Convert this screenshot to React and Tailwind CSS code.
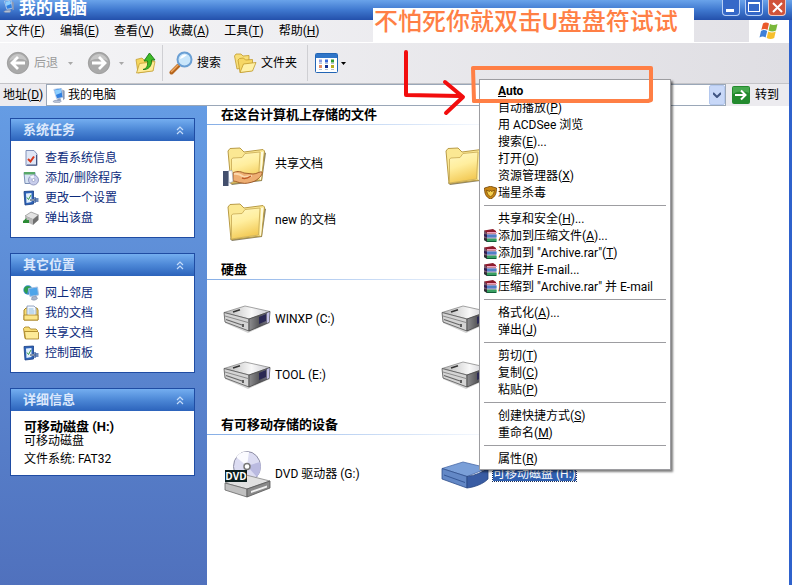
import clsx from 'clsx';

function ComputerIcon({ className }) {
  return (
    <svg className={className} viewBox="0 0 16 16">
      <path d="M2 14.500c2-2 6-2 9-.500l-1.500 1.500H4z" fill="#b9c3d6" stroke="#7d8aa5" strokeWidth=".5" />
      <path d="M3 1.500 11 0l2 10-7 1.500z" fill="#2f7fe0" stroke="#c4d3ea" strokeWidth="1" />
      <path d="M4 2.300 10.300 1l.8 4L5 7.500z" fill="#8ed0ff" />
      <path d="M12 1.500 14.500 3v8.500L13 13z" fill="#8c9ab5" />
      <path d="m7 11.500 3-.5 1 2.500H6.500z" fill="#8fa0bf" />
    </svg>
  );
}

function NavIcon({ forward }) {
  return (
    <svg className="h-6 w-6" viewBox="0 0 24 24">
      <circle cx="12" cy="12" r="10.700" fill="#a9a9a9" stroke="#959595" strokeWidth=".8" />
      <path d="M3 10a9.300 9.300 0 0 1 18 0c-5-3-13-3-18 0z" fill="#c6c6c6" />
      <path
        d={forward ? 'M5 12h12M12 6l6 6-6 6' : 'M19 12H7M12 6l-6 6 6 6'}
        fill="none"
        stroke="#fff"
        strokeWidth="2.800"
      />
    </svg>
  );
}

function UpFolderIcon() {
  return (
    <svg className="h-6 w-6" viewBox="0 0 24 24">
      <path d="M2 8.500 8 7l2 2 9-1.500v12L4 22z" fill="#f5d65e" stroke="#c49f33" strokeWidth=".8" />
      <path d="m2.500 22 3-9.500 15.500-2-2 9.500z" fill="#ffec98" stroke="#c49f33" strokeWidth=".8" />
      <path d="M9 18.500c4-1 5-4 4.500-8.500H10l5.500-8L21 9h-3.500c.5 6-3 10-8.500 9.500z" fill="#3fbb28" stroke="#1b7a14" strokeWidth=".9" />
    </svg>
  );
}

function SearchIcon() {
  return (
    <svg className="h-6 w-6" viewBox="0 0 24 24">
      <path d="m2.500 21.500 7-7" stroke="#b5651d" strokeWidth="4" strokeLinecap="round" />
      <path d="m2.500 20.500 6.500-6.500" stroke="#f0a860" strokeWidth="1.500" strokeLinecap="round" />
      <circle cx="15.500" cy="8.500" r="7" fill="#c9e6fb" stroke="#6a9fd4" strokeWidth="2" />
      <path d="M11 8a5 5 0 0 1 7-4c-2 1-3 3-7 4z" fill="#fff" />
    </svg>
  );
}

function FoldersIcon() {
  return (
    <svg className="h-6 w-6" viewBox="0 0 24 24">
      <path d="M1.500 5 3 3h5l2 2 6-.5v11L4 18z" fill="#f8df7a" stroke="#c29a2b" strokeWidth=".8" />
      <path d="m5 9 1.500-1.500 4-.5 2 2 7-.5v11L7 21.500z" fill="#f6d765" stroke="#c29a2b" strokeWidth=".8" />
      <path d="m7 21.500 3.500-8.500 12.500-1.500-3.500 8.500z" fill="#fff1a6" stroke="#c29a2b" strokeWidth=".8" />
    </svg>
  );
}

function ViewsIcon() {
  return (
    <svg className="h-5 w-6" viewBox="0 0 24 20">
      <rect x=".5" y=".5" width="22" height="19" rx="1" fill="#fff" stroke="#2265b5" />
      <path d="M1 1h21v4H1z" fill="#2f75c8" />
      <path d="M4 6.500h3v3H4z" fill="#8c9be0" />
      <path d="M10 6.500h3v3h-3z" fill="#3a67d8" />
      <path d="M16 6.500h3v3h-3z" fill="#2f9a35" />
      <path d="M4 12h3v3H4z" fill="#e58a63" />
      <path d="M10 12h3v3h-3z" fill="#152f91" />
      <path d="M16 12h3v3h-3z" fill="#b8ad1f" />
      <path d="M4 10.500h3m3 0h3m3 0h3M4 16.500h3m3 0h3m3 0h3" stroke="#b5bfd2" />
    </svg>
  );
}

function Caret({ className }) {
  return (
    <svg className={clsx('h-[3px] w-[5px]', className)} viewBox="0 0 5 3">
      <path d="M0 0h5L2.500 3z" fill="currentColor" />
    </svg>
  );
}

function WindowsFlag() {
  return (
    <svg className="h-5 w-5" viewBox="0 0 20 20">
      <path d="M4 2.500C6 1 8 1.300 10 2.500L8.500 9C6.500 7.800 4.500 7.800 2.300 9z" fill="#ea5a2c" />
      <path d="M11 3c2.500 1.300 5 1.200 7.500 0L17 9.500c-2.500 1.200-5 1.200-7.500 0z" fill="#7ab83a" />
      <path d="M2 10c2.200-1.200 4.200-1.200 6.200 0l-1.600 6.500C4.600 15.300 2.600 15.300.5 16.500z" fill="#3f80d8" />
      <path d="M9.200 10.500c2.500 1.300 5 1.200 7.500 0l-1.500 6.500c-2.500 1.300-5 1.200-7.500 0z" fill="#f7bf2c" />
    </svg>
  );
}

function DocCheckIcon() {
  return (
    <svg className="h-4 w-4" viewBox="0 0 16 16">
      <path d="M3 .5h8L14 4v11.500H3z" fill="#dfe6f6" stroke="#8291b8" />
      <path d="M13.500 5v10H4" fill="none" stroke="#46557f" />
      <path d="m5 9 2.500 2.500L11 6.500" fill="none" stroke="#d8361a" strokeWidth="2" />
    </svg>
  );
}

function ProgramsIcon() {
  return (
    <svg className="h-4 w-4" viewBox="0 0 16 16">
      <path d="M1 2.500h11v11H2z" fill="#d7e3f3" stroke="#7b8fb5" />
      <path d="M1 2h11v2.500H1z" fill="#58a868" />
      <circle cx="10.500" cy="10" r="5" fill="#c8cdeb" stroke="#7f88b4" strokeWidth=".8" />
      <path d="M10.500 10 7 6.500a5 5 0 0 1 4-1.300z" fill="#f5f7ff" />
      <circle cx="10.500" cy="10" r="1.500" fill="#fff" stroke="#7f88b4" strokeWidth=".6" />
    </svg>
  );
}

function SettingsIcon() {
  return (
    <svg className="h-4 w-4" viewBox="0 0 16 16">
      <path d="M1 1.500 10.500 1v13L2 15z" fill="#2d62b8" stroke="#173e83" strokeWidth=".8" />
      <path d="M3 3.500 8.500 3v9L3.500 13z" fill="#e2f0fd" />
      <path d="m4 7.500 1.500 2L8 5" fill="none" stroke="#3a9b46" />
      <path d="M7 10h6" stroke="#8292a8" strokeWidth="2" />
      <path d="M12 7v2h3.500M12 13v-2h3.500" fill="none" stroke="#3b62a2" strokeWidth="1.300" />
    </svg>
  );
}

function EjectIcon() {
  return (
    <svg className="h-4 w-4" viewBox="0 0 16 16">
      <path d="m2 6 6-4 7.500 3L10 9.500z" fill="#e3e3e3" stroke="#777" strokeWidth=".6" />
      <path d="m2 6 8 3.500V15l-8-4z" fill="#b8b8b8" />
      <path d="m10 9.500 5.500-4.500v5L10 15z" fill="#6f6f6f" />
      <path d="m0 11 3.500-3v2H6v3H0z" fill="#2b8b35" />
    </svg>
  );
}

function NetworkIcon() {
  return (
    <svg className="h-4 w-4" viewBox="0 0 16 16">
      <circle cx="5" cy="5" r="4.700" fill="#3f8fd0" />
      <path d="M2 2c3-2 5-1 6 1L5 5 4 9C1 7 0 5 2 2z" fill="#2f9d50" />
      <path d="m5.500 3.500 9-1.500 1 8-8.500 1.500z" fill="#4ea5ea" stroke="#a9c0e2" />
      <path d="m9 12 4-1 1.500 2.500c-2 2-4 2-6 1z" fill="#a8b4cb" stroke="#6b7a99" strokeWidth=".5" />
    </svg>
  );
}

function DocumentsIcon() {
  return (
    <svg className="h-4 w-4" viewBox="0 0 16 16">
      <path d="M1 5 3 3h11l1 2v10H1z" fill="#f7dc74" stroke="#a98422" />
      <path d="M4 1h7l2 2v9H4z" fill="#f6faff" stroke="#7c90b4" strokeWidth=".8" />
      <path d="M5.500 4h5M5.500 6h6M5.500 8h6" stroke="#87b8dc" />
      <path d="M1 10h14v5H1z" fill="#fbe58a" stroke="#a98422" strokeWidth=".8" />
    </svg>
  );
}

function SmallFolderIcon() {
  return (
    <svg className="h-4 w-4" viewBox="0 0 16 16">
      <path d="M.5 3.500 2 2h4l1.500 2H13l1.500 1.500v8H2z" fill="#f7dc74" stroke="#a27c1d" strokeWidth=".8" />
      <path d="M1.500 6.500h13l1 1V14H2.500z" fill="#fdeb98" stroke="#a27c1d" strokeWidth=".8" />
    </svg>
  );
}

function FolderIcon({ shared }) {
  return (
    <svg className="h-12 w-12" viewBox="0 0 48 48">
      <defs>
        <linearGradient id="folderFront" x1="0" y1="0" x2=".3" y2="1">
          <stop offset="0" stopColor="#fff8c4" />
          <stop offset=".5" stopColor="#ffee9e" />
          <stop offset="1" stopColor="#f3cb58" />
        </linearGradient>
      </defs>
      <path d="m41 12 2 1-4 28-30 4-2-2z" fill="#8d8468" />
      <path d="M5 11 7 8.500 17 8l4 4 19-2.500L41.500 11 38.500 40 8 43.500z" fill="#fbe893" stroke="#b99b45" />
      <path d="m38 12 2.500-.5L38 39.500 37 40z" fill="#fffbe0" />
      <path d="M8.500 19 10 18l9-.5 3-4L37 12l-1.500 27L8.500 43z" fill="url(#folderFront)" stroke="#cdb05a" strokeWidth=".9" />
      {shared && (
        <>
          <path
            d="M10 33c3-2 7-2 11 0l9 1c4 0 7-3 9-2 1 2-2 6-7 9-5 2-10 3-13 2-3 0-6-2-9-2z"
            fill="#eeae72"
            stroke="#9a5526"
            strokeWidth=".9"
          />
          <path d="M11 34c4-1 7 1 10 3l8-1" fill="none" stroke="#fbd9ae" strokeWidth="2" />
          <path d="M19 38c3 1 6 0 9-2" fill="none" stroke="#c05a26" strokeWidth="1.500" />
          <path d="m5 31 4-.5 1 11-4 1.500z" fill="#fff" stroke="#9aa4ba" strokeWidth=".6" />
          <path d="M0 31h5.500v15H0z" fill="#434f6d" />
        </>
      )}
    </svg>
  );
}

function DriveIcon() {
  return (
    <svg className="h-12 w-12" viewBox="0 0 48 48">
      <defs>
        <linearGradient id="driveTop" x1="0" y1="0" x2="1" y2="0">
          <stop offset="0" stopColor="#b4b4b4" />
          <stop offset=".6" stopColor="#f8f8f8" />
          <stop offset="1" stopColor="#c9c9cf" />
        </linearGradient>
        <linearGradient id="driveSide" x1="0" y1="0" x2="1" y2="0">
          <stop offset="0" stopColor="#8e8e90" />
          <stop offset=".5" stopColor="#555558" />
          <stop offset="1" stopColor="#7b7a92" />
        </linearGradient>
      </defs>
      <path d="m2 28 23 10 22-10v-4H2z" fill="#d2d2d2" />
      <path d="M1 17.500 22 11l25 5.500L26 24z" fill="url(#driveTop)" stroke="#8b8b8b" strokeWidth=".8" />
      <path d="M1 17.500 26 24v12L2 27z" fill="#d4d4d4" stroke="#555" strokeWidth=".8" />
      <path d="m2 21 23 6.500" stroke="#777" strokeWidth=".8" />
      <path d="m3 24.500 16 5.500" stroke="#666" strokeWidth="1.200" />
      <path d="M20 29v3" stroke="#333" strokeWidth="1.500" />
      <path d="m26 24 21-7.500-1 11L26 36z" fill="url(#driveSide)" stroke="#444" strokeWidth=".8" />
      <path d="m36 22 7-3v7l-7 3z" fill="#2b2954" />
      <path d="m44 18 2.500-1-.5 10-2 1z" fill="#c3c0e6" />
      <path d="m10 17 7-2.300" stroke="#333" strokeWidth="1.500" />
    </svg>
  );
}

function DvdIcon() {
  return (
    <svg className="h-12 w-12" viewBox="0 0 48 48">
      <ellipse cx="24" cy="16.500" rx="13.500" ry="15" fill="#dcdcf2" stroke="#8d8da4" />
      <path d="M24 16 13 7a14 15 0 0 1 13-5z" fill="#fbfbff" />
      <path d="m24 16 13-4c2 6 0 11-3 15z" fill="#babae0" />
      <circle cx="24" cy="16.500" r="3" fill="#fff" stroke="#777" strokeWidth="1.500" />
      <path d="m2 33 21-8 24 6-23 8z" fill="#e1e1e1" stroke="#888" strokeWidth=".8" />
      <path d="m2 33 22 6v8L2 40z" fill="#c0c0c0" stroke="#666" strokeWidth=".8" />
      <path d="m24 39 23-8v7l-23 9z" fill="#8a8a8a" stroke="#555" strokeWidth=".8" />
      <path d="m28 41 16-5.500v2L28 43z" fill="#f0f0f0" />
      <path d="M2 20h22v12H2z" fill="#0a1d1d" />
      <text x="13" y="30" textAnchor="middle" fontSize="10" fontWeight="700" fill="#fff" fontFamily="Open Sans, sans-serif">
        DVD
      </text>
    </svg>
  );
}

function SelectedDriveIcon() {
  return (
    <svg className="h-12 w-12" viewBox="0 0 48 48">
      <path d="M1 18.500 22 12l25 6-21 8.500z" fill="#7a9fd8" stroke="#4a6ba8" strokeWidth=".8" />
      <path d="m1 18.500 25 8V38L1 29z" fill="#6388c6" stroke="#2f4e8a" strokeWidth=".8" />
      <path d="M26 26.500c8-1 15-4 21-8.500v11c-5 5-13 8-21 9z" fill="#395ca3" stroke="#284682" strokeWidth=".8" />
      <path d="m3 25 21 7.500" stroke="#355796" />
    </svg>
  );
}

function ShieldIcon() {
  return (
    <svg className="h-[13px] w-[13px]" viewBox="0 0 13 13">
      <path d="M.5 2 4 1l2.500-1L9 1l3.500 1c0 5-1 9-6 11-5-2-6-6-6-11z" fill="#c98613" stroke="#6f4307" strokeWidth=".8" />
      <path d="m2.500 4 3 1.500L6.500 4l1 1.500 3-1.500-1 4-3 3-3-3z" fill="#f4cf50" stroke="#6f4307" strokeWidth=".7" />
    </svg>
  );
}

function RarIcon() {
  return (
    <svg className="h-[13px] w-[13px]" viewBox="0 0 13 13">
      <path d="m0 1.500 9-1.500 3 2v2.500H3z" fill="#8e1b2c" />
      <path d="M3 3h10v1H3z" fill="#f0a0c0" />
      <path d="m0 5 3 .5h9.500v3H3L0 7z" fill="#232f9c" />
      <path d="M3 6.500h10v1H3z" fill="#7fd4f2" />
      <path d="m0 9 3 .5h9.500V13H3l-3-2z" fill="#12603a" />
      <path d="M3 10.500h10v1H3z" fill="#5fe08a" />
      <path d="M0 1.500V11l3 2V4z" fill="#3a1730" opacity=".7" />
    </svg>
  );
}

// Label with its access key underlined, e.g. 文件(F)
function KeyLabel({ text, accessKey, tail }) {
  return (
    <>
      {text}
      {accessKey && (
        <>
          (<u className="underline-offset-1">{accessKey}</u>)
        </>
      )}
      {tail}
    </>
  );
}

const menus = [
  ['文件', 'F'],
  ['编辑', 'E'],
  ['查看', 'V'],
  ['收藏', 'A'],
  ['工具', 'T'],
  ['帮助', 'H'],
];

const contextGroups = [
  [
    { text: '自动播放', accessKey: 'P' },
    { text: '用 ACDSee 浏览' },
    { text: '搜索', accessKey: 'E', tail: '...' },
    { text: '打开', accessKey: 'O' },
    { text: '资源管理器', accessKey: 'X' },
    { text: '瑞星杀毒', icon: <ShieldIcon /> },
  ],
  [
    { text: '共享和安全', accessKey: 'H', tail: '...' },
    { text: '添加到压缩文件', accessKey: 'A', tail: '...', icon: <RarIcon /> },
    { text: '添加到 "Archive.rar"', accessKey: 'T', icon: <RarIcon /> },
    { text: '压缩并 E-mail...', icon: <RarIcon /> },
    { text: '压缩到 "Archive.rar" 并 E-mail', icon: <RarIcon /> },
  ],
  [
    { text: '格式化', accessKey: 'A', tail: '...' },
    { text: '弹出', accessKey: 'J' },
  ],
  [
    { text: '剪切', accessKey: 'T' },
    { text: '复制', accessKey: 'C' },
    { text: '粘贴', accessKey: 'P' },
  ],
  [
    { text: '创建快捷方式', accessKey: 'S' },
    { text: '重命名', accessKey: 'M' },
  ],
  [{ text: '属性', accessKey: 'R' }],
];

const systemTasks = [
  { text: '查看系统信息', icon: <DocCheckIcon /> },
  { text: '添加/删除程序', icon: <ProgramsIcon /> },
  { text: '更改一个设置', icon: <SettingsIcon /> },
  { text: '弹出该盘', icon: <EjectIcon /> },
];

const otherPlaces = [
  { text: '网上邻居', icon: <NetworkIcon /> },
  { text: '我的文档', icon: <DocumentsIcon /> },
  { text: '共享文档', icon: <SmallFolderIcon /> },
  { text: '控制面板', icon: <SettingsIcon /> },
];

function TitleBar() {
  return (
    <header className="flex h-5 items-start bg-linear-to-b from-[#6aa3ea] via-[#3f78cf] to-[#2450ab] pr-[6px] pl-[2px]">
      <ComputerIcon className="h-[13px] w-[13px]" />
      <h1 className="ml-1 flex-1 text-[17px] leading-4 font-bold text-white">我的电脑</h1>
      <div className="flex gap-[5px]">
        <button aria-label="最小化" className="flex h-4 w-[18px] items-end rounded-b-sm border border-t-0 border-[#b9d0f5] bg-[#3568c8] p-[3px]">
          <span className="h-[3px] w-2 bg-white" />
        </button>
        <button aria-label="最大化" className="flex h-4 w-[18px] items-end justify-center rounded-b-sm border border-t-0 border-[#b9d0f5] bg-[#3568c8] pb-[3px]">
          <span className="h-[10px] w-3 border border-t-2 border-white" />
        </button>
        <button aria-label="关闭" className="flex h-4 w-[18px] items-end justify-center rounded-b-sm border border-t-0 border-[#f0c8c0] bg-[#d0533a] pb-[2px]">
          <svg className="h-[11px] w-[11px]" viewBox="0 0 11 11">
            <path d="m1 1 9 9m0-9-9 9" stroke="#fff" strokeWidth="2" />
          </svg>
        </button>
      </div>
    </header>
  );
}

function MenuBar() {
  return (
    <nav className="flex h-[23px] items-stretch border-b border-white bg-linear-to-r from-[#f6f6f8] to-[#e2e1e6]">
      <div className="flex flex-1 items-center gap-[15px] pl-[6px]">
        {menus.map(([text, key]) => (
          <button key={key}>
            <KeyLabel text={text} accessKey={key} />
          </button>
        ))}
      </div>
      <div className="flex w-10 items-center justify-center bg-white">
        <WindowsFlag />
      </div>
    </nav>
  );
}

function Toolbar() {
  return (
    <div className="flex h-[41px] items-center border-b border-[#c4c4c8] bg-linear-to-r from-[#f5f5f7] to-[#dfdee3] pl-[6px]">
      <button className="flex items-center gap-1 text-[#9a9a9a]" disabled>
        <NavIcon />
        后退
      </button>
      <Caret className="ml-[10px] text-[#a8a8a8]" />
      <button className="ml-[14px]" aria-label="前进" disabled>
        <NavIcon forward />
      </button>
      <Caret className="ml-2 text-[#a8a8a8]" />
      <button className="ml-[10px]" aria-label="向上">
        <UpFolderIcon />
      </button>
      <span className="ml-1 h-9 w-px bg-[#cfcfd3]" />
      <button className="ml-[6px] flex items-center gap-1">
        <SearchIcon />
        搜索
      </button>
      <button className="ml-3 flex items-center gap-1">
        <FoldersIcon />
        文件夹
      </button>
      <span className="ml-[10px] h-9 w-px bg-[#cfcfd3]" />
      <button className="ml-[7px] flex items-center gap-[2px]" aria-label="视图">
        <ViewsIcon />
        <Caret />
      </button>
    </div>
  );
}

function AddressBar() {
  return (
    <div className="flex h-[22px] items-center bg-[#ecebef] pl-[3px]">
      <label htmlFor="address" className="w-[43px]">
        <KeyLabel text="地址" accessKey="D" />
      </label>
      <div className="flex h-[22px] flex-1 items-center border border-[#9aa7b8] bg-white pl-1">
        <ComputerIcon className="h-[15px] w-[15px]" />
        <input id="address" className="ml-[2px] h-4 min-w-0 flex-1 outline-none" defaultValue="我的电脑" />
        <button aria-label="地址列表" className="flex h-5 w-4 items-center justify-center rounded-xs border border-[#b4c8ee] bg-[#c8d8f8]">
          <svg className="h-[6px] w-2" viewBox="0 0 8 6">
            <path d="m0 1 4 4 4-4" fill="none" stroke="#3f5482" strokeWidth="2" />
          </svg>
        </button>
      </div>
      <button className="ml-[6px] flex w-[57px] items-center gap-[5px]">
        <svg className="h-[18px] w-[18px]" viewBox="0 0 18 18">
          <rect width="18" height="18" rx="2" fill="#238a2e" />
          <path d="M1 1h16v6C11 5 6 5 1 8z" fill="#46a84e" />
          <path d="M3 9h10M9 4.500 13.500 9 9 13.500" fill="none" stroke="#fff" strokeWidth="2" />
        </svg>
        转到
      </button>
    </div>
  );
}

function Panel({ title, children }) {
  return (
    <section className="border border-[#1f4ca3] bg-white">
      <button className="flex h-[22px] w-full items-center justify-between bg-linear-to-b from-[#74aef0] via-[#4c87d6] to-[#2c63bb] pr-[10px] pl-3 text-[13px] font-bold text-[#dbe8fc]">
        {title}
        <svg className="h-[9px] w-2" viewBox="0 0 8 9">
          <path d="M1 4 4 1l3 3M1 8l3-3 3 3" fill="none" stroke="#c6dcfa" strokeWidth="1.200" />
        </svg>
      </button>
      {children}
    </section>
  );
}

function LinkList({ items }) {
  return (
    <ul className="pt-[7px] pb-[9px] pl-3">
      {items.map((item) => (
        <li key={item.text}>
          <a href="#" className="flex h-5 items-center gap-[6px] text-[#0c2b7c]">
            {item.icon}
            {item.text}
          </a>
        </li>
      ))}
    </ul>
  );
}

function Sidebar() {
  return (
    <aside className="flex w-[207px] shrink-0 flex-col gap-[15px] bg-linear-to-b from-[#659ce4] to-[#5071bd] pt-3 pr-3 pl-[10px]">
      <Panel title="系统任务">
        <LinkList items={systemTasks} />
      </Panel>
      <Panel title="其它位置">
        <LinkList items={otherPlaces} />
      </Panel>
      <Panel title="详细信息">
        <div className="pt-2 pb-2 pl-[13px] leading-[15px]">
          <p className="text-[13px] font-bold">可移动磁盘 (H:)</p>
          <p>可移动磁盘</p>
          <p className="mt-[3px]">文件系统: FAT32</p>
        </div>
      </Panel>
    </aside>
  );
}

function FileGroup({ title, items }) {
  return (
    <section>
      <h2 className="flex h-[18px] items-center pl-[14px] text-[13px] font-bold">{title}</h2>
      <div className="h-px w-[300px] bg-linear-to-r from-[#86aee6] to-white" />
      <div className="grid grid-cols-[218px_218px] pt-[11px] pb-[13px] pl-4">
        {items.map((item, i) => (
          <div key={i} className="flex h-14 items-center gap-1">
            {item.icon}
            {item.text && (
              <span
                className={clsx(
                  'leading-[13px]',
                  item.selected && 'bg-[#2f5fb0] text-white outline-1 outline-dotted outline-[#1b2f5a]'
                )}
              >
                {item.text}
              </span>
            )}
          </div>
        ))}
      </div>
    </section>
  );
}

function ContextMenu() {
  return (
    <div className="absolute top-[79px] left-[479px] w-[192px] border border-[#9d9da1] bg-white px-1 py-[2px] shadow-[2px_2px_2px_rgba(0,0,0,0.5)]">
      <button className="flex h-[17px] w-full items-center pl-[14px] font-bold">
        <span>
          <u className="underline-offset-1">A</u>uto
        </span>
      </button>
      {contextGroups.map((group, i) => (
        <div key={i}>
          {i > 0 && <hr className="my-1 border-t border-[#9d9da1]" />}
          {group.map(({ icon, ...label }) => (
            <button key={label.text} className="flex h-[17px] w-full items-center gap-px whitespace-nowrap">
              <span className="w-[13px] shrink-0">{icon}</span>
              <span>
                <KeyLabel {...label} />
              </span>
            </button>
          ))}
        </div>
      ))}
    </div>
  );
}

function Annotations() {
  return (
    <>
      <p className="absolute top-2 left-[373px] flex h-[35px] w-[321px] items-start bg-white pl-px text-2xl leading-7 font-medium whitespace-nowrap text-[#ff7f45]">
        不怕死你就双击U盘盘符试试
      </p>
      <svg className="pointer-events-none absolute top-10 left-[372px] h-20 w-[300px]" viewBox="0 0 300 80">
        <g fill="none" strokeLinecap="round" strokeLinejoin="round" strokeWidth="4">
          <path d="M34 12v43l54 1M73 42l18 15-17 16" stroke="#f20d0d" />
          <path d="M101 28h178v32l-3 1H102z" stroke="#ff7f45" />
          <path d="M102 61h14" stroke="#ff7f45" />
        </g>
      </svg>
    </>
  );
}

export default function App() {
  return (
    <div className="relative flex min-h-screen flex-col overflow-hidden bg-white pb-[2px] font-[Roboto,'Noto_Sans_CJK_SC',sans-serif] text-xs text-black">
      <TitleBar />
      <div className="flex flex-1 border-r-3 border-[#2f62cc]">
        <div className="flex min-w-0 flex-1 flex-col">
          <MenuBar />
          <Toolbar />
          <AddressBar />
          <div className="flex flex-1">
            <Sidebar />
            <main className="min-w-0 flex-1">
              <FileGroup
                title="在这台计算机上存储的文件"
                items={[
                  { text: '共享文档', icon: <FolderIcon shared /> },
                  { icon: <FolderIcon /> },
                  { text: 'new 的文档', icon: <FolderIcon /> },
                ]}
              />
              <FileGroup
                title="硬盘"
                items={[
                  { text: 'WINXP (C:)', icon: <DriveIcon /> },
                  { icon: <DriveIcon /> },
                  { text: 'TOOL (E:)', icon: <DriveIcon /> },
                  { icon: <DriveIcon /> },
                ]}
              />
              <FileGroup
                title="有可移动存储的设备"
                items={[
                  { text: 'DVD 驱动器 (G:)', icon: <DvdIcon /> },
                  { text: '可移动磁盘 (H:)', icon: <SelectedDriveIcon />, selected: true },
                ]}
              />
            </main>
          </div>
        </div>
      </div>
      <ContextMenu />
      <Annotations />
    </div>
  );
}
